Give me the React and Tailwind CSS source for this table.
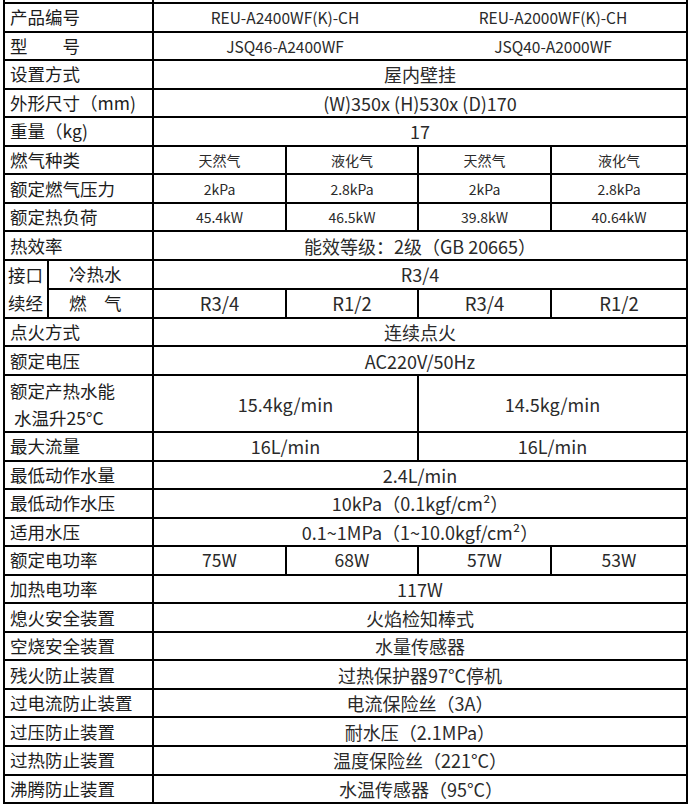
import React from 'react';

const FONT = { fontFamily: '"Noto Sans CJK SC", "Noto Sans", sans-serif' };

const cell = 'border-2 border-black text-center align-middle p-0 leading-[22px]';
const label = 'border-2 border-black text-left align-middle pl-[5px] pr-0 py-0 leading-[22px] whitespace-nowrap text-[17.5px] text-[#1c1c1c]';
const big = 'text-[18px] text-[#2a2a2a]';
const small = 'text-[14px] text-[#2a2a2a]';

// rows that stretch one value over the four model columns
const Full = ({ name, value, cls = big }) => (
  <tr className="h-[28.55px]">
    <td colSpan={2} className={label}>{name}</td>
    <td colSpan={4} className={`${cell} ${cls}`}>{value}</td>
  </tr>
);

// rows with one value per model column
const Four = ({ name, values, cls = small }) => (
  <tr className="h-[28.55px]">
    <td colSpan={2} className={label}>{name}</td>
    {values.map((v, i) => (
      <td key={i} className={`${cell} ${cls}`}>{v}</td>
    ))}
  </tr>
);

// model number rows: two values, no divider between them
const Pair = ({ name, values }) => (
  <tr className="h-[28.55px]">
    <td colSpan={2} className={label}>{name}</td>
    <td colSpan={4} className={`${cell} text-[15.5px] text-[#2a2a2a]`}>
      <div className="grid grid-cols-2">
        <span className="pr-[4px]">{values[0]}</span>
        <span>{values[1]}</span>
      </div>
    </td>
  </tr>
);

export default function App() {
  return (
    <div className="bg-white w-[688px] h-[811px] overflow-hidden" style={FONT}>
      <table className="table-fixed border-collapse ml-[3px] w-[683px]">
        <colgroup>
          <col className="w-[44px]" />
          <col className="w-[105px]" />
          <col className="w-[133px]" />
          <col className="w-[132px]" />
          <col className="w-[133px]" />
          <col className="w-[136px]" />
        </colgroup>
        <tbody>
          <tr className="h-[3px]">
            <td colSpan={2} className="border-2 border-t-0 border-black p-0" />
            <td colSpan={4} className="border-2 border-t-0 border-black p-0" />
          </tr>
          <Pair name="产品编号" values={['REU-A2400WF(K)-CH', 'REU-A2000WF(K)-CH']} />
          <Pair name="型　　号" values={['JSQ46-A2400WF', 'JSQ40-A2000WF']} />
          <Full name="设置方式" value="屋内壁挂" />
          <Full name="外形尺寸（mm)" value="(W)350x (H)530x (D)170" />
          <Full name="重量（kg)" value="17" />
          <Four name="燃气种类" values={['天然气', '液化气', '天然气', '液化气']} />
          <Four name="额定燃气压力" values={['2kPa', '2.8kPa', '2kPa', '2.8kPa']} />
          <Four name="额定热负荷" values={['45.4kW', '46.5kW', '39.8kW', '40.64kW']} />
          <Full name="热效率" value="能效等级：2级（GB 20665）" />
          <tr className="h-[28.55px]">
            <td rowSpan={2} className="border-2 border-black p-0 pl-[3px] align-middle text-[17.5px] leading-[28px] text-[#1c1c1c]">
              接口
              <br />
              续经
            </td>
            <td className="border-2 border-black p-0 pl-[20px] text-left text-[17.5px] leading-[22px] text-[#1c1c1c]">冷热水</td>
            <td colSpan={4} className={`${cell} ${big}`}>R3/4</td>
          </tr>
          <tr className="h-[28.55px]">
            <td className="border-2 border-black p-0 pl-[20px] text-left text-[17.5px] leading-[22px] text-[#1c1c1c]">燃　气</td>
            {['R3/4', 'R1/2', 'R3/4', 'R1/2'].map((v, i) => (
              <td key={i} className={`${cell} text-[18.5px] text-[#2a2a2a]`}>{v}</td>
            ))}
          </tr>
          <Full name="点火方式" value="连续点火" />
          <Full name="额定电压" value="AC220V/50Hz" />
          <tr className="h-[57px]">
            <td colSpan={2} className={`${label} !leading-[27px]`}>
              额定产热水能
              <br />
              <span className="pl-[4px]">水温升25°C</span>
            </td>
            <td colSpan={2} className={`${cell} text-[18px] text-[#2a2a2a]`}>15.4kg/min</td>
            <td colSpan={2} className={`${cell} text-[18px] text-[#2a2a2a]`}>14.5kg/min</td>
          </tr>
          <tr className="h-[28.55px]">
            <td colSpan={2} className={label}>最大流量</td>
            <td colSpan={2} className={`${cell} ${big}`}>16L/min</td>
            <td colSpan={2} className={`${cell} ${big}`}>16L/min</td>
          </tr>
          <Full name="最低动作水量" value="2.4L/min" />
          <Full name="最低动作水压" value="10kPa（0.1kgf/cm²）" />
          <Full name="适用水压" value="0.1~1MPa（1~10.0kgf/cm²）" />
          <Four name="额定电功率" values={['75W', '68W', '57W', '53W']} cls="text-[17.5px] text-[#2a2a2a]" />
          <Full name="加热电功率" value="117W" />
          <Full name="熄火安全装置" value="火焰检知棒式" />
          <Full name="空烧安全装置" value="水量传感器" />
          <Full name="残火防止装置" value="过热保护器97°C停机" />
          <Full name="过电流防止装置" value="电流保险丝（3A）" />
          <Full name="过压防止装置" value="耐水压（2.1MPa）" />
          <Full name="过热防止装置" value="温度保险丝（221°C）" />
          <Full name="沸腾防止装置" value={<span className="pl-[2px]">水温传感器（95°C）</span>} />
        </tbody>
      </table>
    </div>
  );
}
